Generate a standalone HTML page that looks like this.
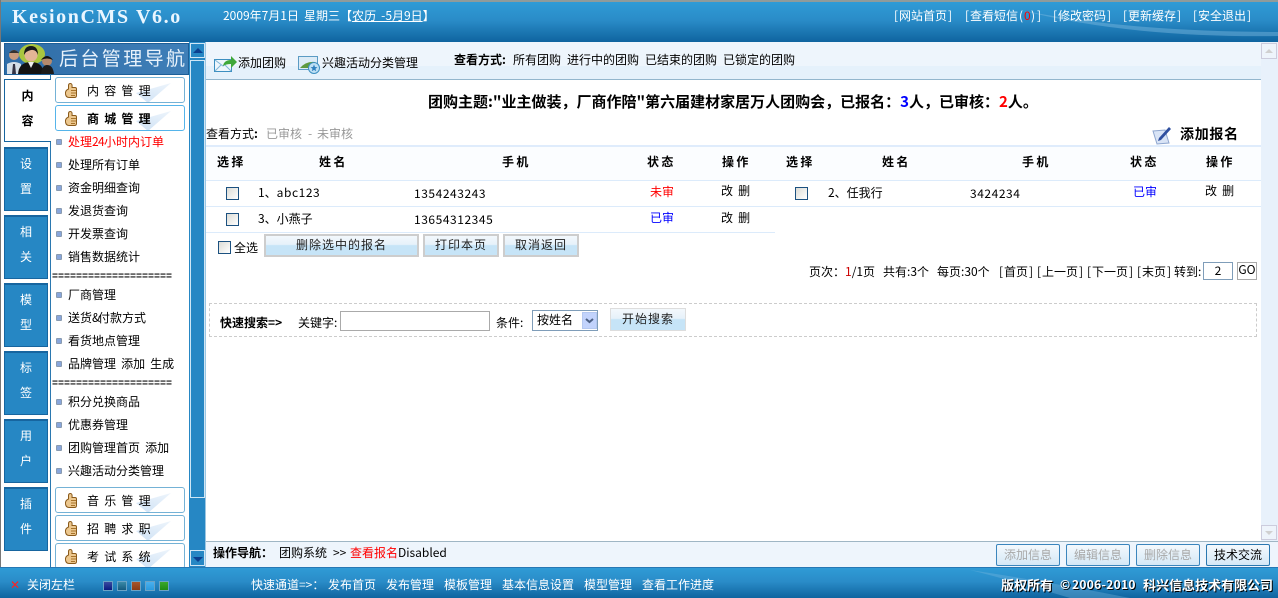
<!DOCTYPE html>
<html><head><meta charset="utf-8"><style>
*{box-sizing:border-box}
html,body{margin:0;padding:0;width:1278px;height:598px;overflow:hidden;background:#fff}
body{position:relative;font:12px/14px "WenQuanYi Zen Hei","Noto Sans CJK SC",sans-serif;color:#000;word-spacing:2.4px}
.a,.t{position:absolute;white-space:nowrap}
.t{line-height:14px}
.b{font-weight:bold}
.n{letter-spacing:.55px}
i{display:inline-block;width:6px;font-style:normal;text-align:center}
.bar{background:linear-gradient(#2f9bd6 0,#2a8cc8 45%,#0f649f 100%)}
.tab{position:absolute;left:4px;width:44px;height:64px;background:#2687c4;border:1px solid #17659f;border-top-width:2px;color:#fff;text-align:center;padding-top:2px;line-height:25px;font-size:12px}
.side{position:absolute;left:55px;width:130px;height:26px;border:1px solid #74b2d6;border-radius:3px;background:#fff;overflow:hidden}
.side:after{content:"";position:absolute;left:0;top:0;width:130px;height:26px;clip-path:polygon(115px 5px,92px 25px,80px 15px);background:linear-gradient(to bottom left,#f6fafe,#bcd6f0)}
.side span{position:absolute;left:31px;top:6px;letter-spacing:5.2px;white-space:nowrap;z-index:1}
.side svg{position:absolute;left:9px;top:5px}
.dot{position:absolute;left:56px;width:6px;height:6px;background:#88a6dc;border:1px solid #8a9bb0;border-radius:1px}
.m{position:absolute;left:68px;white-space:nowrap;line-height:14px}
.sep{position:absolute;left:52px;font:10px/10px "Liberation Mono",monospace;letter-spacing:0;white-space:nowrap;color:#111;font-weight:bold}
.hr{position:absolute;height:1px;background:#dcebfb}
.cb{position:absolute;width:13px;height:13px;border:1px solid #1c5180;background:linear-gradient(135deg,#dcdcd6,#fff)}
.btn{position:absolute;top:234px;height:23px;border:2px solid #cdcdcd;background:linear-gradient(#f3f8fc 0,#e6f1fa 45%,#c6e4f7 50%,#c6e4f7 100%);text-align:center;line-height:18px;font-size:12px;color:#222;letter-spacing:1px}
.fb{position:absolute;top:544px;width:64px;height:22px;border:1px solid #3b86bd;border-radius:2px;background:linear-gradient(#f4f9fd,#d4e8f6);text-align:center;line-height:20px;color:#a8a8a8}
.sq{position:absolute;top:581px;width:10px;height:10px;border:1px solid #6aa3c6}
.th{letter-spacing:2.4px;font-weight:bold;top:155px}
.q{top:578px;color:#fff}
</style></head><body>

<div class="a bar" style="left:0;top:0;width:1278px;height:42px;border-top:2px solid #8f9b9b;overflow:hidden">
<svg class="a" style="left:0;top:0" width="1278" height="40"><path d="M1020 8 Q1130 30 1278 30 L1278 34 Q1130 36 1020 8Z" fill="#7fbbe0" opacity=".45"/></svg>
</div>
<div class="a" style="left:0;top:0;width:1px;height:598px;background:#777"></div>
<div class="t" style="left:12px;top:6px;font:bold 20px/22px 'Liberation Serif',serif;color:#eaf6ff;letter-spacing:1.6px;word-spacing:0">KesionCMS V6.o</div>
<div class="t" style="left:223px;top:9px;color:#fff">2009年7月1日 星期三【<u>农历 -5月9日</u>】</div>
<div class="t" style="left:893px;top:9px;color:#fff"><i>[</i>网站首页<i>]</i></div>
<div class="t" style="left:964px;top:9px;color:#fff"><i>[</i>查看短信<i>(</i><i style="color:#f00">0</i><i>)</i><i>]</i></div>
<div class="t" style="left:1052px;top:9px;color:#fff"><i>[</i>修改密码<i>]</i></div>
<div class="t" style="left:1122px;top:9px;color:#fff"><i>[</i>更新缓存<i>]</i></div>
<div class="t" style="left:1192px;top:9px;color:#fff"><i>[</i>安全退出<i>]</i></div>

<div class="a" style="left:4px;top:42px;width:201px;height:525px;background:#fff"></div>
<div class="a" style="left:4px;top:43px;width:185px;height:32px;background:linear-gradient(90deg,#2f6da8,#3f7fb8);border:1px solid #1d5f98"></div>
<svg class="a" style="left:5px;top:44px" width="50" height="30"><ellipse cx="27" cy="10" rx="13" ry="10" fill="#a9c63f"/><circle cx="9" cy="11" r="5" fill="#c99b7d"/><path d="M4 9q5-6 10 0z" fill="#333"/><path d="M2 30V20q7-4 14 0v10z" fill="#d5dfe8"/><path d="M8 20h2l1 10H7z" fill="#334"/><circle cx="26" cy="11" r="6.500" fill="#e3b596"/><path d="M19 11q0-9 7-9t7 9q-2-6-7-5t-7 5z" fill="#1a1a1a"/><path d="M13 30q1-12 13-12q12 0 13 12z" fill="#131313"/><path d="M23 18h6l-3 6z" fill="#eee"/><circle cx="42" cy="17" r="5" fill="#b58a6c"/><path d="M36 16q6-8 12 0q-6-3-12 0z" fill="#111"/><path d="M36 30q1-9 6-9q6 0 7 9z" fill="#1b1b1b"/></svg>
<div class="t" style="left:59px;top:47px;font-size:19px;line-height:22px;color:#e8f2fb;letter-spacing:2.4px">后台管理导航</div>

<div class="a" style="left:50px;top:74px;width:1px;height:493px;background:#2a78b0"></div>
<div class="a" style="left:4px;top:79px;width:47px;height:63px;background:#fff;border:1px solid #17659f;border-right:0"></div>
<div class="a b" style="left:5px;top:83px;width:45px;text-align:center;line-height:25px;font-size:12px">内<br>容</div>
<div class="tab" style="top:147px">设<br>置</div>
<div class="tab" style="top:215px">相<br>关</div>
<div class="tab" style="top:283px">模<br>型</div>
<div class="tab" style="top:351px">标<br>签</div>
<div class="tab" style="top:419px">用<br>户</div>
<div class="tab" style="top:487px">插<br>件</div>

<div class="side" style="top:77px"><svg width="12" height="15"><path d="M3.500 6V2.500Q3.500.5 5.500.5T7 4.500H10Q11.500 4.500 11.500 6V12.500Q11.500 14.500 9.500 14.500H4Q1 14.500.5 11T3.500 6Z" fill="#ecc78e" stroke="#8a5a1a"/><path d="M6 7.500H11M6 10H11M6 12.500H10" stroke="#a8742c" fill="none"/></svg><span>内容管理</span></div>
<div class="side" style="top:105px;border-color:#55b4ea"><svg width="12" height="15"><path d="M3.500 6V2.500Q3.500.5 5.500.5T7 4.500H10Q11.500 4.500 11.500 6V12.500Q11.500 14.500 9.500 14.500H4Q1 14.500.5 11T3.500 6Z" fill="#ecc78e" stroke="#8a5a1a"/><path d="M6 7.500H11M6 10H11M6 12.500H10" stroke="#a8742c" fill="none"/></svg><span class="b">商城管理</span></div>
<div class="side" style="top:487px"><svg width="12" height="15"><path d="M3.500 6V2.500Q3.500.5 5.500.5T7 4.500H10Q11.500 4.500 11.500 6V12.500Q11.500 14.500 9.500 14.500H4Q1 14.500.5 11T3.500 6Z" fill="#ecc78e" stroke="#8a5a1a"/><path d="M6 7.500H11M6 10H11M6 12.500H10" stroke="#a8742c" fill="none"/></svg><span>音乐管理</span></div>
<div class="side" style="top:515px"><svg width="12" height="15"><path d="M3.500 6V2.500Q3.500.5 5.500.5T7 4.500H10Q11.500 4.500 11.500 6V12.500Q11.500 14.500 9.500 14.500H4Q1 14.500.5 11T3.500 6Z" fill="#ecc78e" stroke="#8a5a1a"/><path d="M6 7.500H11M6 10H11M6 12.500H10" stroke="#a8742c" fill="none"/></svg><span>招聘求职</span></div>
<div class="side" style="top:543px"><svg width="12" height="15"><path d="M3.500 6V2.500Q3.500.5 5.500.5T7 4.500H10Q11.500 4.500 11.500 6V12.500Q11.500 14.500 9.500 14.500H4Q1 14.500.5 11T3.500 6Z" fill="#ecc78e" stroke="#8a5a1a"/><path d="M6 7.500H11M6 10H11M6 12.500H10" stroke="#a8742c" fill="none"/></svg><span>考试系统</span></div>

<div class="dot" style="top:139px"></div><div class="m" style="top:135px;color:#f00">处理<span style="letter-spacing:-.7px">24</span>小时内订单</div>
<div class="dot" style="top:162px"></div><div class="m" style="top:158px">处理所有订单</div>
<div class="dot" style="top:185px"></div><div class="m" style="top:181px">资金明细查询</div>
<div class="dot" style="top:208px"></div><div class="m" style="top:204px">发退货查询</div>
<div class="dot" style="top:231px"></div><div class="m" style="top:227px">开发票查询</div>
<div class="dot" style="top:254px"></div><div class="m" style="top:250px">销售数据统计</div>
<div class="sep" style="top:273px">====================</div>
<div class="dot" style="top:292px"></div><div class="m" style="top:288px">厂商管理</div>
<div class="dot" style="top:315px"></div><div class="m" style="top:311px">送货<i>&amp;</i>付款方式</div>
<div class="dot" style="top:338px"></div><div class="m" style="top:334px">看货地点管理</div>
<div class="dot" style="top:361px"></div><div class="m" style="top:357px">品牌管理 添加 生成</div>
<div class="sep" style="top:380px">====================</div>
<div class="dot" style="top:399px"></div><div class="m" style="top:395px">积分兑换商品</div>
<div class="dot" style="top:422px"></div><div class="m" style="top:418px">优惠券管理</div>
<div class="dot" style="top:445px"></div><div class="m" style="top:441px">团购管理首页 添加</div>
<div class="dot" style="top:468px"></div><div class="m" style="top:464px">兴趣活动分类管理</div>

<div class="a" style="left:189px;top:42px;width:17px;height:525px;background:#2687c4;border-right:1px solid #9cc6e2"></div>
<div class="a" style="left:190px;top:43px;width:15px;height:15px;border:1px solid #cfe6f5;background:#2687c4"></div>
<svg class="a" style="left:193px;top:48px" width="10" height="6"><path d="M5 0L10 5H0z" fill="#0a3f8f"/></svg>
<div class="a" style="left:190px;top:60px;width:15px;height:438px;border:1px solid #cfe6f5;background:#2687c4"></div>
<div class="a" style="left:190px;top:550px;width:15px;height:16px;border:1px solid #cfe6f5;background:#2687c4"></div>
<svg class="a" style="left:193px;top:557px" width="10" height="6"><path d="M0 0H10L5 5z" fill="#0a3f8f"/></svg>

<div class="a" style="left:206px;top:42px;width:1055px;height:24px;background:#eef5fc"></div>
<div class="a" style="left:206px;top:66px;width:1055px;height:13px;background:#e5f1fb"></div>
<div class="a" style="left:206px;top:79px;width:1055px;height:1px;background:#93b6cd"></div>
<svg class="a" style="left:214px;top:54px" width="24" height="18"><rect x=".5" y="5.500" width="17" height="12" fill="#eef6fc" stroke="#3d8fc0"/><path d="M1 6l8 6 8-6M1 17l6-6M17 17l-6-6" fill="none" stroke="#7fb6d8"/><path d="M9 12q1-6 8-6V2l6 6-6 6v-4q-5 0-8 2z" fill="#3fa83a"/></svg>
<div class="t" style="left:238px;top:56px">添加团购</div>
<svg class="a" style="left:298px;top:56px" width="24" height="18"><rect x=".5" y=".5" width="19" height="13" fill="#dcebf6" stroke="#5b9bc4"/><path d="M2 12q6-7 15-6v6z" fill="#5e9a3f"/><circle cx="16" cy="12" r="5.500" fill="#bfe0f4" stroke="#3d8fc0"/><path d="M16 8.500l1 2.500 2.500.2-2 1.600.7 2.500-2.200-1.400-2.200 1.400.7-2.500-2-1.600 2.500-.2z" fill="#2f7fbe"/></svg>
<div class="t" style="left:322px;top:56px">兴趣活动分类管理</div>
<div class="t b" style="left:454px;top:53px">查看方式:</div>
<div class="t" style="left:513px;top:53px">所有团购</div>
<div class="t" style="left:567px;top:53px">进行中的团购</div>
<div class="t" style="left:645px;top:53px">已结束的团购</div>
<div class="t" style="left:723px;top:53px">已锁定的团购</div>

<div class="t b" style="left:428px;top:94px;font-size:15px;line-height:16px">团购主题:"业主做装，厂商作陪"第六届建材家居万人团购会，已报名：<span style="color:#00f">3</span>人，已审核：<span style="color:#f00">2</span>人。</div>

<div class="t" style="left:206px;top:127px">查看方式<b>:</b></div>
<div class="t" style="left:266px;top:127px;color:#999">已审核</div>
<div class="t" style="left:308px;top:127px;color:#999">-</div>
<div class="t" style="left:317px;top:127px;color:#999">未审核</div>
<svg class="a" style="left:1152px;top:126px" width="20" height="19"><path d="M1 5L13 4 17 17 5 18z" fill="#d9e4f6" stroke="#8ea6cf"/><path d="M7 12L17 1l2 2L9 14l-3 1z" fill="#2f4f9f"/></svg>
<div class="t b" style="left:1180px;top:126px;font-size:14px;line-height:16px;letter-spacing:.7px">添加报名</div>

<div class="a" style="left:206px;top:145px;width:1055px;height:2px;background:#dfecfc"></div>
<div class="a" style="left:206px;top:147px;width:1055px;height:33px;background:#fbfdff"></div>
<div class="hr" style="left:206px;top:180px;width:1055px"></div>
<div class="hr" style="left:206px;top:206px;width:1055px"></div>
<div class="hr" style="left:206px;top:232px;width:569px"></div>

<div class="t th" style="left:217px">选择</div>
<div class="t th" style="left:319px">姓名</div>
<div class="t th" style="left:502px">手机</div>
<div class="t th" style="left:647px">状态</div>
<div class="t th" style="left:722px">操作</div>
<div class="t th" style="left:786px">选择</div>
<div class="t th" style="left:882px">姓名</div>
<div class="t th" style="left:1022px">手机</div>
<div class="t th" style="left:1130px">状态</div>
<div class="t th" style="left:1206px">操作</div>

<div class="cb" style="left:226px;top:187px"></div>
<div class="t" style="left:258px;top:186px">1、<span class="n">abc123</span></div>
<div class="t n" style="left:414px;top:187px">1354243243</div>
<div class="t" style="left:650px;top:185px;color:#f00">未审</div>
<div class="t" style="left:721px;top:184px">改 删</div>
<div class="cb" style="left:795px;top:187px"></div>
<div class="t" style="left:828px;top:186px">2、任我行</div>
<div class="t n" style="left:970px;top:187px">3424234</div>
<div class="t" style="left:1133px;top:185px;color:#00f">已审</div>
<div class="t" style="left:1205px;top:184px">改 删</div>
<div class="cb" style="left:226px;top:213px"></div>
<div class="t" style="left:258px;top:212px">3、小燕子</div>
<div class="t n" style="left:414px;top:213px">13654312345</div>
<div class="t" style="left:650px;top:211px;color:#00f">已审</div>
<div class="t" style="left:721px;top:211px">改 删</div>

<div class="cb" style="left:218px;top:241px"></div>
<div class="t" style="left:234px;top:241px">全选</div>
<div class="btn" style="left:264px;width:155px">删除选中的报名</div>
<div class="btn" style="left:423px;width:76px">打印本页</div>
<div class="btn" style="left:503px;width:76px">取消返回</div>

<div class="t" style="left:809px;top:265px">页次：<span style="color:#c00">1</span>/1页</div>
<div class="t" style="left:883px;top:265px">共有:3个</div>
<div class="t" style="left:937px;top:265px">每页:30个</div>
<div class="t" style="left:998px;top:265px"><i>[</i>首页<i>]</i></div>
<div class="t" style="left:1036px;top:265px"><i>[</i>上一页<i>]</i></div>
<div class="t" style="left:1086px;top:265px"><i>[</i>下一页<i>]</i></div>
<div class="t" style="left:1136px;top:265px"><i>[</i>末页<i>]</i></div>
<div class="t" style="left:1174px;top:265px">转到:</div>
<div class="a" style="left:1203px;top:262px;width:30px;height:18px;border:1px solid #7f9db9;text-align:center;line-height:16px">2</div>
<div class="a" style="left:1237px;top:262px;width:20px;height:18px;border:1px solid #aaa;text-align:center;line-height:14px">GO</div>

<div class="a" style="left:209px;top:303px;width:1048px;height:34px;border:1px dashed #ccc"></div>
<div class="t" style="left:220px;top:316px"><b>快速搜索=&gt;</b></div>
<div class="t" style="left:298px;top:316px">关键字:</div>
<div class="a" style="left:340px;top:311px;width:150px;height:20px;border:1px solid #aaa;background:#fff"></div>
<div class="t" style="left:496px;top:316px">条件:</div>
<div class="a" style="left:532px;top:310px;width:66px;height:21px;border:1px solid #7f9db9;background:#fff;padding:1px 0 0 4px;line-height:16px">按姓名</div>
<div class="a" style="left:582px;top:312px;width:15px;height:17px;background:#c2d3fc;border:1px solid #b4c8f0"></div>
<svg class="a" style="left:585px;top:318px" width="9" height="6"><path d="M1 1l3.500 3L8 1" fill="none" stroke="#4d6185" stroke-width="2"/></svg>
<div class="btn" style="left:610px;top:308px;width:76px;border-width:1px;border-color:#ddd;line-height:20px">开始搜索</div>

<div class="a" style="left:1261px;top:42px;width:17px;height:499px;background:#e8f1fb"></div>
<div class="a" style="left:1261px;top:43px;width:16px;height:16px;border:1px solid #ccd;background:#eef4fb"></div>
<svg class="a" style="left:1264px;top:49px" width="10" height="5"><path d="M5 0L9 4H1z" fill="#d0d0d0"/></svg>
<div class="a" style="left:1261px;top:525px;width:16px;height:15px;border:1px solid #ccd;background:#eef4fb"></div>
<svg class="a" style="left:1264px;top:531px" width="10" height="5"><path d="M1 0H9L5 4z" fill="#d0d0d0"/></svg>

<div class="a" style="left:206px;top:541px;width:1072px;height:26px;background:#eef5fc;border-top:1px solid #9fb6c4"></div>
<div class="t b" style="left:213px;top:546px">操作导航：</div>
<div class="t" style="left:279px;top:546px">团购系统</div>
<div class="t" style="left:333px;top:546px">&gt;&gt;</div>
<div class="t" style="left:350px;top:546px;color:#f00">查看报名</div>
<div class="t" style="left:398px;top:546px">Disabled</div>
<div class="fb" style="left:996px">添加信息</div>
<div class="fb" style="left:1066px">编辑信息</div>
<div class="fb" style="left:1136px">删除信息</div>
<div class="fb" style="left:1206px;color:#000;border-color:#2a78b0">技术交流</div>

<div class="a bar" style="left:0;top:567px;width:1278px;height:31px;border-top:1px solid #2678b4">
<svg class="a" style="left:0;top:0" width="1278" height="30"><path d="M970 2 Q1050 14 1130 30 L1070 30 Q1010 12 970 2Z" fill="#7fbbe0" opacity=".35"/></svg>
</div>
<div class="t" style="left:10px;top:578px;color:#f22;font-size:12px">✕</div>
<div class="t q" style="left:27px">关闭左栏</div>
<div class="sq" style="left:103px;background:linear-gradient(#3a4aa0,#0a1a80)"></div>
<div class="sq" style="left:117px;background:linear-gradient(#3a8aa8,#155a80)"></div>
<div class="sq" style="left:131px;background:linear-gradient(#a8562c,#8a3a14)"></div>
<div class="sq" style="left:145px;background:linear-gradient(#4ab0ee,#2a9ade)"></div>
<div class="sq" style="left:159px;background:linear-gradient(#3aa82c,#1f8a14)"></div>
<div class="t q" style="left:251px">快速通道=&gt;：</div>
<div class="t q" style="left:328px">发布首页</div>
<div class="t q" style="left:386px">发布管理</div>
<div class="t q" style="left:444px">模板管理</div>
<div class="t q" style="left:502px">基本信息设置</div>
<div class="t q" style="left:584px">模型管理</div>
<div class="t q" style="left:642px">查看工作进度</div>
<div class="t b q" style="left:1001px;font-size:13px;text-shadow:1px 1px 0 #000">版权所有</div>
<div class="t b q" style="left:1060px;font-size:12px;text-shadow:1px 1px 0 #000">©</div>
<div class="t b q" style="left:1072px;font-size:12px;text-shadow:1px 1px 0 #000;letter-spacing:.3px">2006-2010</div>
<div class="t b q" style="left:1143px;font-size:13px;text-shadow:1px 1px 0 #000">科兴信息技术有限公司</div>
</body></html>
